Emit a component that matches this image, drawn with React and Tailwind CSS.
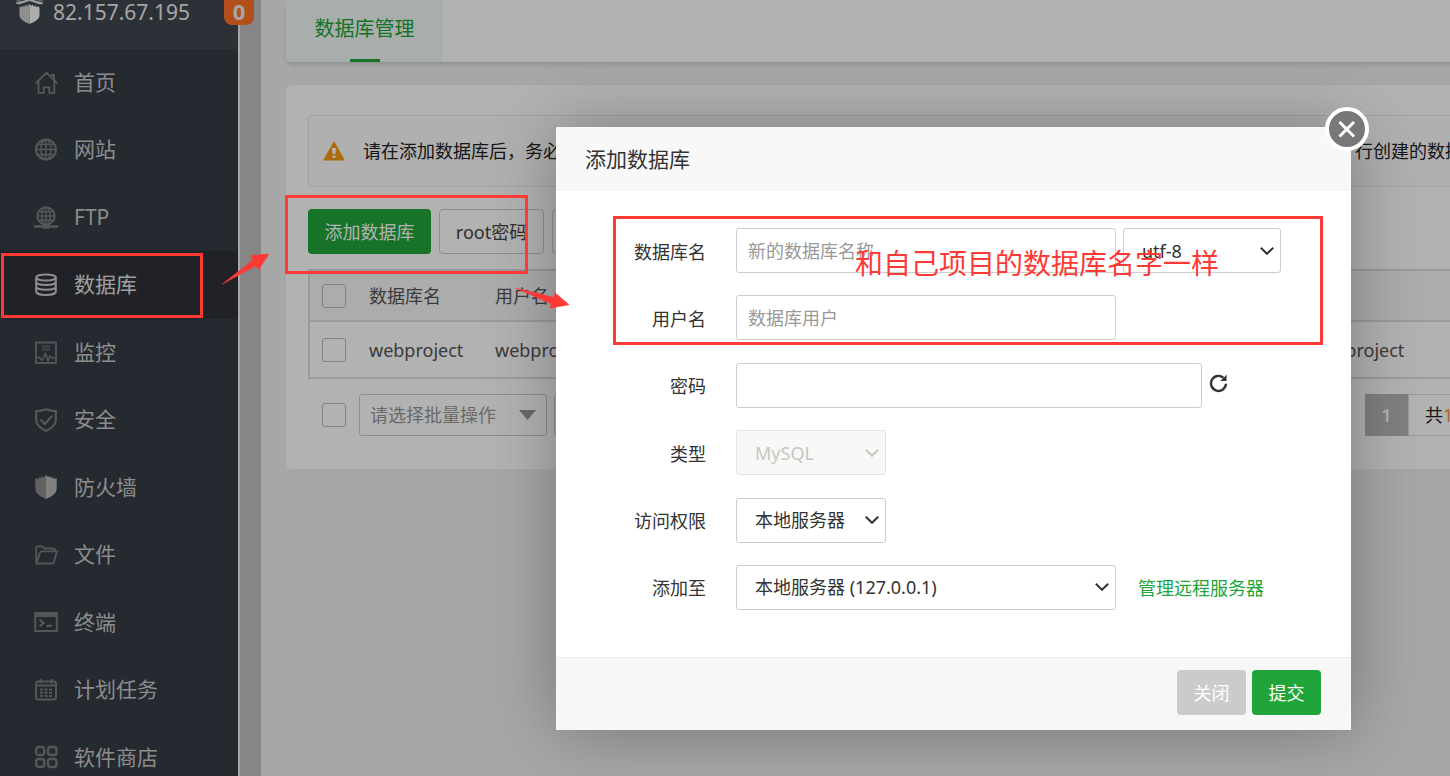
import React from "react";

const navItems = [
  { label: "首页", icon: HomeIcon },
  { label: "网站", icon: GlobeIcon },
  { label: "FTP", icon: FtpIcon },
  { label: "数据库", icon: DatabaseIcon, active: true },
  { label: "监控", icon: MonitorIcon },
  { label: "安全", icon: ShieldIcon },
  { label: "防火墙", icon: FirewallIcon },
  { label: "文件", icon: FolderIcon },
  { label: "终端", icon: TerminalIcon },
  { label: "计划任务", icon: CalendarIcon },
  { label: "软件商店", icon: StoreIcon },
];

function Svg({ children, className = "" }) {
  return (
    <svg
      viewBox="0 0 24 24"
      className={`size-6 shrink-0 ${className}`}
      fill="none"
      stroke="currentColor"
      strokeWidth="1.5"
      aria-hidden="true"
    >
      {children}
    </svg>
  );
}

function HomeIcon() {
  return (
    <Svg>
      <path
        strokeWidth="1.8"
        d="M1.500 12.500 12.500 1.800l11 10.700M4.500 10v11.800h5.300v-5.500h5.500v5.500h5V10M17 4h3v4"
      />
    </Svg>
  );
}

function GlobeIcon() {
  return (
    <Svg>
      <circle cx="12" cy="11.500" r="10" strokeWidth="2" />
      <ellipse cx="12" cy="11.500" rx="5" ry="10" />
      <path d="M12 2v20M2 11.500h20M4 6.500h16M4 16.500h16" />
    </Svg>
  );
}

function FtpIcon() {
  return (
    <Svg>
      <circle cx="12" cy="10" r="8.700" strokeWidth="2" />
      <ellipse cx="12" cy="10" rx="4.300" ry="8.700" />
      <path d="M12 1.500v20M3 10h18M5 5.800h14M5 14.200h14" />
      <path d="M0 20.500h24" strokeWidth="2.500" />
      <path d="M9 20.500h6" strokeWidth="4.500" />
    </Svg>
  );
}

function DatabaseIcon() {
  return (
    <Svg>
      <g strokeWidth="2">
        <ellipse cx="12" cy="4.500" rx="9.800" ry="3" />
        <path d="M2.200 4.500v14c0 2 4.300 3.500 9.800 3.500s9.800-1.500 9.800-3.500v-14M2.200 9c0 1.800 4.300 3 9.800 3s9.800-1.200 9.800-3M2.200 13.800c0 1.800 4.300 3 9.800 3s9.800-1.200 9.800-3" />
      </g>
    </Svg>
  );
}

function MonitorIcon() {
  return (
    <Svg>
      <path strokeWidth="1.800" d="M2 1.500h20v20.500H2z" />
      <path opacity="0.6" strokeWidth="1.800" d="M8 5.500h8M8 8.500h8" />
      <path d="M2.500 16.500h3l2.500 3 3.500-7 2.500 7.500 2-5 2 2h4" />
    </Svg>
  );
}

function ShieldIcon() {
  return (
    <Svg>
      <path
        strokeWidth="2.200"
        d="M12 1.300C9 2.600 6 3.200 2.200 3.200v8.600c0 5 4 8.500 9.800 11.200 5.800-2.700 9.800-6.200 9.800-11.200V3.200C18 3.200 15 2.600 12 1.300z"
      />
      <path strokeWidth="2.200" d="m6.500 11.500 4.300 4.500L18 8" />
    </Svg>
  );
}

function FirewallIcon() {
  return (
    <Svg>
      <path
        stroke="none"
        fill="#8c8c8c"
        d="M12 0v24C5 21 1.300 18 1.300 13V3.200L4.500 4V2.200l3 .8V1.200l2.500.8z"
      />
      <path
        stroke="none"
        fill="#b8b8b8"
        d="M12 0v24c7-3 10.700-6 10.700-11V3.200L19.500 4V2.200l-3 .8V1.200L14 2z"
      />
    </Svg>
  );
}

function FolderIcon() {
  return (
    <Svg>
      <g strokeWidth="1.800">
        <path d="M2.200 20V4.800c0-1 .5-1.500 1.500-1.500H8l2.500 2.200h8.500c1.200 0 2 .8 2 2V8" />
        <path d="M2.500 20.500 6 9.500c.2-.7.700-1.200 1.500-1.200H23L19.800 19.500c-.2.700-.7 1-1.500 1z" />
      </g>
    </Svg>
  );
}

function TerminalIcon() {
  return (
    <Svg>
      <path strokeWidth="2" d="M1.200 3h21.600v18H1.200z" />
      <path stroke="none" fill="currentColor" d="M1 2h22v5H1z" />
      <path strokeWidth="2.200" d="m5.500 9.500 4 3.500-4 3.500M12.500 15.800H18" />
    </Svg>
  );
}

function CalendarIcon() {
  return (
    <Svg>
      <rect x="2" y="3.500" width="20" height="18" rx="2.500" strokeWidth="2" />
      <path d="M2 7.500h20M6.500 1v4.500M17.500 1v4.500" strokeWidth="2" />
      <path strokeWidth="2" strokeDasharray="3 1.500" d="M6 11.500h13M6 14.700h13M6 18h13" />
    </Svg>
  );
}

function StoreIcon() {
  return (
    <Svg>
      <g strokeWidth="2.400">
        <rect x="2.200" y="2" width="8" height="8" rx="2.500" />
        <rect x="14" y="2" width="8.500" height="8" rx="2.500" />
        <rect x="2.200" y="14" width="8" height="8" rx="2.500" />
        <rect x="14" y="14" width="8.500" height="8" rx="2.500" />
      </g>
    </Svg>
  );
}

function Sidebar() {
  return (
    <aside className="flex w-[238px] shrink-0 flex-col bg-[#363c46] text-[#c8c8c8]">
      <div className="relative flex h-[49px] shrink-0 bg-[#3f454f] pl-4">
        <svg viewBox="0 0 28 28" className="-mt-1 size-7 shrink-0" aria-hidden="true">
          <path fill="#e0e0e0" d="M0 5 13.500 1 27 5v2.500l-3 1L13.500 5 3 8.500 0 7.500z" />
          <path fill="none" stroke="#3f454f" strokeWidth="1" d="M0 6l13.500-3.500L27 6" />
          <path fill="#cfcfcf" d="M3.500 11.500 6 10v1.500L8.500 9v2L11 8.500V10l2.500-2v20C7 25 3.500 23 3.500 19z" />
          <path fill="#f8f8f8" d="M23.500 11.500 21 10v1.500L18.500 9v2L16 8.500V10l-2.500-2v20c6.500-3 10-5 10-9z" />
        </svg>
        <span className="ml-[9px] h-6 text-[21px] leading-6 text-[#ececec]">82.157.67.195</span>
        <span className="absolute -right-4 -top-2 z-10 flex h-[33px] w-[30px] items-center justify-center rounded-lg bg-[#ff7226] pt-1 text-[22px] font-bold leading-6 text-[#eee]">
          0
        </span>
      </div>
      <nav className="grid h-[742px] shrink-0 auto-rows-fr">
        {navItems.map(({ label, icon: Icon, active }) => (
          <a
            key={label}
            href="#"
            className={
              active
                ? "flex items-center gap-4 bg-[#2e3238] pl-[34px] text-[21px] text-[#e4e4e4]"
                : "flex items-center gap-4 pl-[34px] text-[21px] text-[#c8c8c8]"
            }
          >
            <span className={active ? "text-[#cccccc]" : "text-[#7b7c7e]"}>
              <Icon />
            </span>
            {label}
          </a>
        ))}
      </nav>
    </aside>
  );
}

function Check({ label }) {
  return (
    <input
      type="checkbox"
      aria-label={label}
      className="block size-6 shrink-0 appearance-none rounded-[3px] border border-[#bbb]"
    />
  );
}

function MainPanel() {
  return (
    <main className="w-[1300px] shrink-0 pl-[25px] text-lg">
      <div className="flex h-[62px] rounded-b-md bg-white shadow-md">
        <button
          type="button"
          className="relative flex w-[157px] items-center justify-center rounded-bl-md bg-[#f1faf5] pb-1 text-xl text-[#20a53a]"
        >
          数据库管理
          <span className="absolute bottom-0 h-[3px] w-[30px] bg-[#20a53a]" />
        </button>
      </div>

      <section className="mt-[23px] rounded-md bg-white px-[22px] pb-[33px] pt-[30px]">
        <div className="flex h-[72px] items-center rounded-sm border border-[#e6e6e6] bg-[#fdfdfd] pl-[14px] text-[#222]">
          <svg viewBox="0 0 22 20" className="mr-[18px] h-5 w-[22px] shrink-0" aria-hidden="true">
            <path fill="#f59b12" d="M11 0 22 19.500H0z" />
            <path fill="#fff" d="M8.800 7h4.400l-.9 6H9.700zM9.600 14.500h2.800V17H9.600z" />
          </svg>
          <p className="flex whitespace-nowrap">
            <span className="w-[992px] overflow-hidden">请在添加数据库后，务必</span>
            <span>行创建的数据</span>
          </p>
        </div>

        <div className="mt-[22px] flex h-[45px] gap-2 text-[#444]">
          <button type="button" className="w-[123px] rounded bg-[#20a53a] text-white">
            添加数据库
          </button>
          <button type="button" className="w-[105px] rounded border border-[#ccc]">
            root密码
          </button>
          <button type="button" aria-label="更多" className="w-24 rounded border border-[#ccc]" />
        </div>

        <table className="mt-[15px] w-full table-fixed border-collapse border-2 border-[#ddd] text-left text-[#555]">
          <thead>
            <tr className="h-[51px] border-b-2 border-[#ddd] bg-[#f7f7f7]">
              <th className="w-[60px] pl-3 font-normal">
                <Check label="全选" />
              </th>
              <th className="w-[126px] font-normal">数据库名</th>
              <th className="w-[815px] font-normal">用户名</th>
              <th className="font-normal" />
            </tr>
          </thead>
          <tbody>
            <tr className="h-[57px]">
              <td className="pl-3">
                <Check label="选择 webproject" />
              </td>
              <td>webproject</td>
              <td>webproject</td>
              <td>webproject</td>
            </tr>
          </tbody>
        </table>

        <div className="mt-[15px] flex h-[42px] items-center pl-[14px]">
          <Check label="全部选择" />
          <button
            type="button"
            className="ml-[13px] flex h-full w-[188px] items-center justify-between rounded-[3px] border border-[#ccc] px-[10px] text-[#999]"
          >
            请选择批量操作
            <svg viewBox="0 0 17 10" className="h-[10px] w-[17px]" aria-hidden="true">
              <path fill="#999" d="M0 0h17L8.500 10z" />
            </svg>
          </button>
          <span className="ml-[7px] h-full w-[95px] rounded-[3px] border border-[#ccc]" />
          <div className="ml-auto flex h-full w-[174px] items-center">
            <span className="flex h-full w-[43px] items-center justify-center bg-[#b8b8b8] font-semibold text-white">
              1
            </span>
            <span className="flex h-full flex-1 items-center border border-[#ddd] pl-4 text-[#222]">
              共<span className="text-[#fc8d26]">1</span>条
            </span>
          </div>
        </div>
      </section>
    </main>
  );
}

function Select({ id, label, children, className, disabled }) {
  return (
    <span className={`relative flex h-[45px] items-center ${className}`}>
      <select
        id={id}
        aria-label={label}
        disabled={disabled}
        className="size-full appearance-none rounded-[3px] border border-[#ccc] bg-white pl-[18px] text-[#333] disabled:border-[#e4e4e4] disabled:bg-[#f8f8f8] disabled:text-[#c8c7be] disabled:opacity-100"
      >
        <option>{children}</option>
      </select>
      <svg
        viewBox="0 0 14 8"
        className="pointer-events-none absolute right-[7px] h-2 w-[14px]"
        fill="none"
        stroke={disabled ? "#c8c7be" : "#333"}
        strokeWidth="2"
        aria-hidden="true"
      >
        <path d="m.8.8 6.200 6 6.200-6" />
      </svg>
    </span>
  );
}

function Row({ label, htmlFor, children }) {
  return (
    <div className="flex items-center">
      <label htmlFor={htmlFor} className="mr-[30px] w-[150px] pt-0.5 text-right">
        {label}
      </label>
      {children}
    </div>
  );
}

const field =
  "h-[45px] rounded-[3px] border border-[#ccc] bg-white px-[11px] text-[#333] placeholder:text-[#999] placeholder:opacity-100";

function Dialog() {
  return (
    <div
      role="dialog"
      aria-labelledby="dialog-title"
      className="absolute left-[556px] top-[127px] w-[795px] rounded-t-[2px] bg-white text-lg text-[#333] shadow-[1px_1px_68px_rgba(0,0,0,0.3)]"
    >
      <h2
        id="dialog-title"
        className="flex h-[63px] items-center rounded-t-[2px] border-b border-[#eee] bg-[#f8f8f8] pl-[29px] pt-0.5 text-[21px]"
      >
        添加数据库
      </h2>
      <button type="button" aria-label="关闭窗口" className="absolute -right-[18px] -top-5 size-11">
        <svg viewBox="0 0 44 44" className="size-full" aria-hidden="true">
          <circle cx="22" cy="22" r="20" fill="#787878" stroke="#fff" strokeWidth="4" />
          <path d="m14.500 15 14.500 14.500M29 15 14.500 29.500" stroke="#fff" strokeWidth="3" />
        </svg>
      </button>
      <form onSubmit={(e) => e.preventDefault()}>
        <div className="mb-[47px] mt-[38px] flex h-[382px] flex-col justify-between">
          <Row label="数据库名" htmlFor="db-name">
            <input id="db-name" placeholder="新的数据库名称" className={`w-[380px] ${field}`} />
            <Select label="编码" className="ml-[7px] w-[158px]">
              utf-8
            </Select>
          </Row>
          <Row label="用户名" htmlFor="db-user">
            <input id="db-user" placeholder="数据库用户" className={`w-[380px] ${field}`} />
          </Row>
          <Row label="密码" htmlFor="db-pass">
            <input id="db-pass" className={`w-[466px] ${field}`} />
            <button type="button" aria-label="随机密码" className="ml-[7px] pb-1">
              <svg viewBox="0 0 20 20" className="size-5" fill="none" aria-hidden="true">
                <path d="M14.500 4.800A7.500 7.500 0 1 0 17 10.800" stroke="#333" strokeWidth="2.400" />
                <path d="M17.500 1.500v6.500H11l2.800-2.300L15 4.500z" fill="#333" />
              </svg>
            </button>
          </Row>
          <Row label="类型" htmlFor="db-type">
            <Select id="db-type" className="w-[150px]" disabled>
              MySQL
            </Select>
          </Row>
          <Row label="访问权限" htmlFor="db-access">
            <Select id="db-access" className="w-[150px]">
              本地服务器
            </Select>
          </Row>
          <Row label="添加至" htmlFor="db-server">
            <Select id="db-server" className="w-[380px]">
              本地服务器 (127.0.0.1)
            </Select>
            <a href="#" className="ml-[22px] pt-0.5 text-[#20a53a]">
              管理远程服务器
            </a>
          </Row>
        </div>
        <footer className="flex justify-end gap-[6px] border-t border-[#e8eeec] bg-[#f6f8f8] pb-[15px] pr-[30px] pt-3 text-white">
          <button type="button" className="h-[45px] w-[69px] rounded bg-[#cbcbcb]">
            关闭
          </button>
          <button type="submit" className="h-[45px] w-[69px] rounded bg-[#20a53a]">
            提交
          </button>
        </footer>
      </form>
    </div>
  );
}

function Annotations() {
  return (
    <div className="pointer-events-none absolute inset-0 text-[#fd3a36]">
      <div className="absolute left-[1px] top-[253px] h-[65px] w-[202px] border-3 border-current" />
      <div className="absolute left-[285px] top-[195px] h-[79px] w-[243px] border-3 border-current" />
      <div className="absolute left-[613px] top-[216px] h-[129px] w-[710px] border-3 border-current" />
      <svg className="absolute left-[222px] top-[253px] h-8 w-12" viewBox="222 253 48 32" aria-hidden="true">
        <path
          fill="currentColor"
          stroke="currentColor"
          strokeWidth="0.6"
          d="M222.500 284 252.700 260.300 250.300 255.700 269 254 258.700 269.500 255.500 266z"
        />
      </svg>
      <svg className="absolute left-[515px] top-[287px] h-6 w-[55px]" viewBox="515 287 55 24" aria-hidden="true">
        <path
          fill="currentColor"
          stroke="currentColor"
          strokeWidth="0.6"
          d="M515.500 288 553.500 297.300 555.300 293 569 304.700 550 308.200 551 303.800z"
        />
      </svg>
      <p className="absolute left-[855px] top-[243px] whitespace-nowrap text-[28px] leading-10">
        和自己项目的数据库名字一样
      </p>
    </div>
  );
}

export default function App() {
  return (
    <div className="relative flex h-screen overflow-hidden bg-[#f0f0f0] font-['Noto_Sans','Noto_Sans_CJK_SC',sans-serif] font-normal">
      <Sidebar />
      <div className="ml-[2px] w-[21px] shrink-0 bg-[#c1c1c1]" />
      <MainPanel />
      <div className="absolute inset-0 z-10 bg-black/30" />
      <div className="absolute inset-0 z-20">
        <Dialog />
        <Annotations />
      </div>
    </div>
  );
}
